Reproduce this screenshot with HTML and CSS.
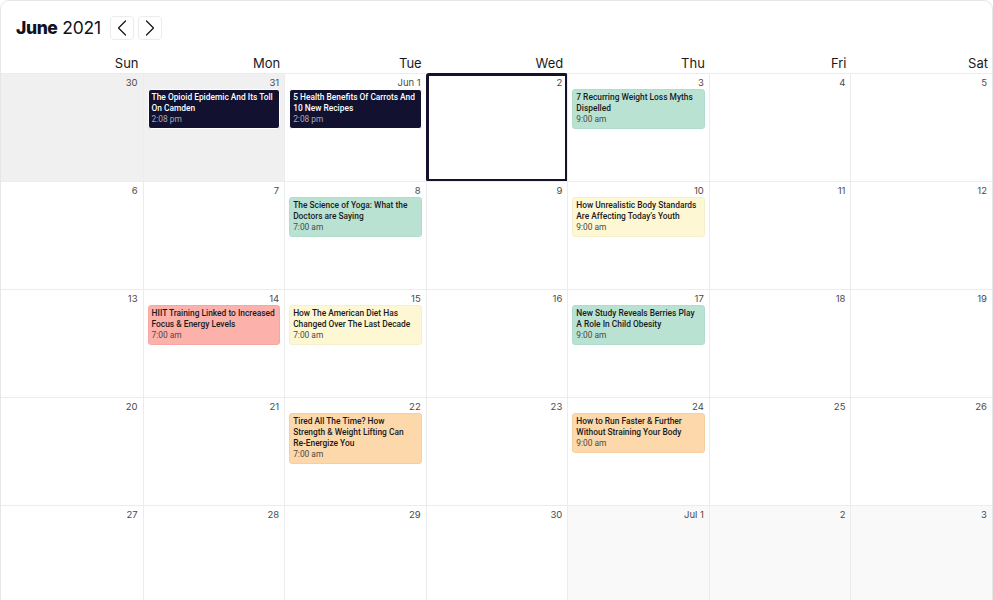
FILE: index.html
```html
<!DOCTYPE html>
<html lang="en">
<head>
<meta charset="utf-8">
<title>June 2021</title>
<link rel="stylesheet" href="styles.css">
</head>
<body>
<div class="calendar">
  <header class="cal-header">
    <h1 class="title"><strong>June</strong> 2021</h1>
    <div class="nav">
      <button class="nav-btn" aria-label="Previous month">
        <svg width="10" height="16" viewBox="0 0 10 16"><path d="M8.5 1 L1.5 8 L8.5 15" fill="none" stroke="#111" stroke-width="1.2" stroke-linecap="round" stroke-linejoin="round"/></svg>
      </button>
      <button class="nav-btn" aria-label="Next month">
        <svg width="10" height="16" viewBox="0 0 10 16"><path d="M1.5 1 L8.5 8 L1.5 15" fill="none" stroke="#111" stroke-width="1.2" stroke-linecap="round" stroke-linejoin="round"/></svg>
      </button>
    </div>
  </header>
  <div class="weekdays">
    <div class="wd">Sun</div><div class="wd">Mon</div><div class="wd">Tue</div><div class="wd">Wed</div><div class="wd">Thu</div><div class="wd">Fri</div><div class="wd">Sat</div>
  </div>
  <div class="grid">
    <!-- week 1 -->
    <div class="cell past"><div class="num">30</div></div>
    <div class="cell past"><div class="num">31</div>
      <div class="ev dark"><div class="ev-title">The Opioid Epidemic And Its Toll On Camden</div><div class="ev-time">2:08 pm</div></div>
    </div>
    <div class="cell"><div class="num">Jun 1</div>
      <div class="ev dark"><div class="ev-title">5 Health Benefits Of Carrots And 10 New Recipes</div><div class="ev-time">2:08 pm</div></div>
    </div>
    <div class="cell today"><div class="num">2</div></div>
    <div class="cell"><div class="num">3</div>
      <div class="ev green"><div class="ev-title">7 Recurring Weight Loss Myths Dispelled</div><div class="ev-time">9:00 am</div></div>
    </div>
    <div class="cell"><div class="num">4</div></div>
    <div class="cell"><div class="num">5</div></div>
    <!-- week 2 -->
    <div class="cell"><div class="num">6</div></div>
    <div class="cell"><div class="num">7</div></div>
    <div class="cell"><div class="num">8</div>
      <div class="ev green"><div class="ev-title">The Science of Yoga: What the Doctors are Saying</div><div class="ev-time">7:00 am</div></div>
    </div>
    <div class="cell"><div class="num">9</div></div>
    <div class="cell"><div class="num">10</div>
      <div class="ev yellow"><div class="ev-title">How Unrealistic Body Standards Are Affecting Today’s Youth</div><div class="ev-time">9:00 am</div></div>
    </div>
    <div class="cell"><div class="num">11</div></div>
    <div class="cell"><div class="num">12</div></div>
    <!-- week 3 -->
    <div class="cell"><div class="num">13</div></div>
    <div class="cell"><div class="num">14</div>
      <div class="ev red"><div class="ev-title">HIIT Training Linked to Increased Focus &amp; Energy Levels</div><div class="ev-time">7:00 am</div></div>
    </div>
    <div class="cell"><div class="num">15</div>
      <div class="ev yellow"><div class="ev-title">How The American Diet Has Changed Over The Last Decade</div><div class="ev-time">7:00 am</div></div>
    </div>
    <div class="cell"><div class="num">16</div></div>
    <div class="cell"><div class="num">17</div>
      <div class="ev green"><div class="ev-title">New Study Reveals Berries Play A Role In Child Obesity</div><div class="ev-time">9:00 am</div></div>
    </div>
    <div class="cell"><div class="num">18</div></div>
    <div class="cell"><div class="num">19</div></div>
    <!-- week 4 -->
    <div class="cell"><div class="num">20</div></div>
    <div class="cell"><div class="num">21</div></div>
    <div class="cell"><div class="num">22</div>
      <div class="ev orange"><div class="ev-title">Tired All The Time? How Strength &amp; Weight Lifting Can Re-Energize You</div><div class="ev-time">7:00 am</div></div>
    </div>
    <div class="cell"><div class="num">23</div></div>
    <div class="cell"><div class="num">24</div>
      <div class="ev orange"><div class="ev-title">How to Run Faster &amp; Further Without Straining Your Body</div><div class="ev-time">9:00 am</div></div>
    </div>
    <div class="cell"><div class="num">25</div></div>
    <div class="cell"><div class="num">26</div></div>
    <!-- week 5 -->
    <div class="cell"><div class="num">27</div></div>
    <div class="cell"><div class="num">28</div></div>
    <div class="cell"><div class="num">29</div></div>
    <div class="cell"><div class="num">30</div></div>
    <div class="cell next"><div class="num">Jul 1</div></div>
    <div class="cell next"><div class="num">2</div></div>
    <div class="cell next"><div class="num">3</div></div>
  </div>
</div>
</body>
</html>
```

FILE: styles.css
```css
html, body {
  margin: 0;
  padding: 0;
  height: 600px;
  overflow: hidden;
  background: #fff;
}

body {
  font-family: Inter, "Liberation Sans", sans-serif;
  color: #111;
}

.calendar {
  width: 993px;
  box-sizing: border-box;
  border: 1px solid #e6e6e6;
  border-radius: 9px;
  overflow: hidden;
  background: #fff;
}

.cal-header {
  display: flex;
  align-items: center;
  gap: 9px;
  padding: 14px 15px 10px;
  height: 25px;
}

.title {
  margin: 0;
  font-size: 17.5px;
  font-weight: 400;
  letter-spacing: -0.2px;
  color: #111124;
  line-height: 24px;
}

.title strong {
  font-weight: 800;
  letter-spacing: -0.4px;
}

.nav {
  display: flex;
  gap: 4px;
}

.nav-btn {
  width: 24px;
  height: 24px;
  padding: 0;
  display: flex;
  align-items: center;
  justify-content: center;
  background: #fff;
  border: 1px solid #ececec;
  border-radius: 4px;
}

.weekdays {
  display: grid;
  grid-template-columns: repeat(7, 1fr);
  height: 23px;
}

.wd {
  text-align: right;
  padding-right: 4px;
  font-size: 13px;
  line-height: 27px;
  color: #1a1a1a;
}

.grid {
  display: grid;
  grid-template-columns: repeat(7, 1fr);
  grid-auto-rows: 108px;
}

.cell {
  position: relative;
  border-top: 1px solid #ececec;
  border-left: 1px solid #ececec;
  padding: 3px 4px 0 4px;
  box-sizing: border-box;
  min-width: 0;
}

.cell:nth-child(7n+1) {
  border-left: none;
}

.cell.past {
  background: #f0f0f0;
}

.cell.next {
  background: #f9f9f9;
}

.cell.today::after {
  content: "";
  position: absolute;
  top: -1px;
  left: -1px;
  right: -1px;
  bottom: -1px;
  border: 3px solid #14132b;
  border-radius: 3px;
}

.num {
  text-align: right;
  font-size: 9.5px;
  line-height: 12px;
  color: #4a4a4a;
  padding-right: 1px;
}

.ev {
  border-radius: 3px;
  padding: 2px 3px 3px;
  font-family: Roboto, "Liberation Sans", sans-serif;
  font-size: 8.4px;
  line-height: 11px;
  border: 1px solid transparent;
}

.ev-title {
  font-weight: 500;
  color: inherit;
}

.ev-time {
  font-weight: 400;
}

.ev.dark {
  background: #121130;
  border-color: #fff;
  color: #fff;
}

.ev.dark .ev-time {
  color: #a8a8b6;
}

.ev.green {
  background: #bae2d3;
  border-color: #b0dccb;
  color: #1a1a1a;
}

.ev.yellow {
  background: #fef7d3;
  border-color: #f6efcb;
  color: #1a1a1a;
}

.ev.red {
  background: #fdb1ab;
  border-color: #f5a8a2;
  color: #1a1a1a;
}

.ev.orange {
  background: #fdd8aa;
  border-color: #f5cfa1;
  color: #1a1a1a;
}

.ev.green .ev-time,
.ev.yellow .ev-time,
.ev.red .ev-time,
.ev.orange .ev-time {
  color: #4a4a4a;
}
```
